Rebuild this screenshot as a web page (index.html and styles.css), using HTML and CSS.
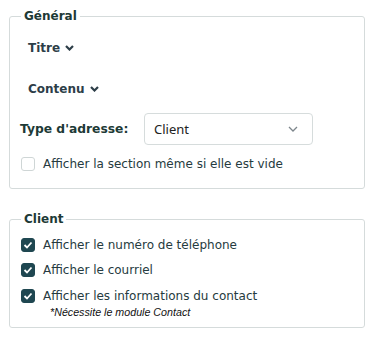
FILE: index.html
```html
<!DOCTYPE html>
<html lang="fr">
<head>
  <meta charset="UTF-8">
  <title>Options</title>
  <link rel="stylesheet" href="styles.css">
</head>
<body>

  <fieldset class="group">
    <legend>Général</legend>

    <div class="toggle">Titre
      <svg class="caret" width="9" height="6" viewBox="0 0 9 6"><path d="M1 1l3.5 3.5L8 1" fill="none" stroke="currentColor" stroke-width="2.2"/></svg>
    </div>
    <div class="toggle">Contenu
      <svg class="caret" width="9" height="6" viewBox="0 0 9 6"><path d="M1 1l3.5 3.5L8 1" fill="none" stroke="currentColor" stroke-width="2.2"/></svg>
    </div>

    <div class="field">
      <label class="field-label">Type d'adresse:</label>
      <div class="select">
        <span>Client</span>
        <svg width="10" height="6" viewBox="0 0 10 6"><path d="M1 1l4 4 4-4" fill="none" stroke="#7d868c" stroke-width="1.3"/></svg>
      </div>
    </div>

    <label class="check">
      <span class="box"></span>
      Afficher la section même si elle est vide
    </label>
  </fieldset>

  <fieldset class="group second">
    <legend>Client</legend>

    <label class="check">
      <span class="box on"><svg width="10" height="8" viewBox="0 0 10 8"><path d="M1.5 4l2.5 2.5L8.5 1.5" fill="none" stroke="#fff" stroke-width="1.8"/></svg></span>
      Afficher le numéro de téléphone
    </label>
    <label class="check">
      <span class="box on"><svg width="10" height="8" viewBox="0 0 10 8"><path d="M1.5 4l2.5 2.5L8.5 1.5" fill="none" stroke="#fff" stroke-width="1.8"/></svg></span>
      Afficher le courriel
    </label>
    <label class="check">
      <span class="box on"><svg width="10" height="8" viewBox="0 0 10 8"><path d="M1.5 4l2.5 2.5L8.5 1.5" fill="none" stroke="#fff" stroke-width="1.8"/></svg></span>
      Afficher les informations du contact
    </label>
    <div class="note">*Nécessite le module Contact</div>
  </fieldset>

</body>
</html>
```

FILE: styles.css
```css
body {
  margin: 0;
  padding: 9px 8px 0 9px;
  background: #fff;
  font-family: "DejaVu Sans", Verdana, sans-serif;
  font-size: 12px;
  color: #263b40;
}

.group {
  margin: 0;
  padding: 5px 10px 14px 10px;
  border: 1px solid #d5dbdb;
  border-radius: 3px;
}

.group legend {
  padding: 0 3px;
  margin-left: 1px;
  font-size: 12px;
  font-weight: bold;
  line-height: 14px;
  color: #1d3a36;
}

.second {
  margin-top: 23px;
  padding-top: 9px;
  padding-bottom: 9px;
}

.toggle {
  padding: 10px 8px 11px;
  line-height: 20px;
  font-size: 12px;
  font-weight: bold;
  color: #2d3e48;
}

.caret {
  margin-left: 1px;
  vertical-align: 1px;
}

.field {
  display: flex;
  align-items: center;
  margin-top: 3px;
}

.field-label {
  width: 124px;
  font-size: 12.3px;
  font-weight: bold;
  color: #1d3a36;
}

.select {
  display: flex;
  align-items: center;
  justify-content: space-between;
  width: 169px;
  height: 32px;
  box-sizing: border-box;
  padding: 0 14px 0 9px;
  border: 1px solid #d6dcdc;
  border-radius: 4px;
  font-family: "Noto Sans", sans-serif;
  font-size: 13px;
  color: #222;
}

.check {
  display: flex;
  align-items: center;
  gap: 8px;
  line-height: 20px;
  margin-top: 9px;
}

.second .check {
  margin-top: 5px;
}

.second .check:first-of-type {
  margin-top: 0;
}

.second .check:nth-of-type(3) {
  margin-top: 6px;
}

.box {
  display: flex;
  align-items: center;
  justify-content: center;
  flex: none;
  width: 14px;
  height: 14px;
  box-sizing: border-box;
  border: 1px solid #cfd6d6;
  border-radius: 3px;
  margin-left: 1px;
}

.box.on {
  background: #1f4751;
  border-color: #1f4751;
}

.note {
  padding-left: 30px;
  margin-top: 0;
  line-height: 12px;
  font-family: "Liberation Sans", Arial, sans-serif;
  font-size: 10.7px;
  font-style: italic;
  color: #111;
}
```
